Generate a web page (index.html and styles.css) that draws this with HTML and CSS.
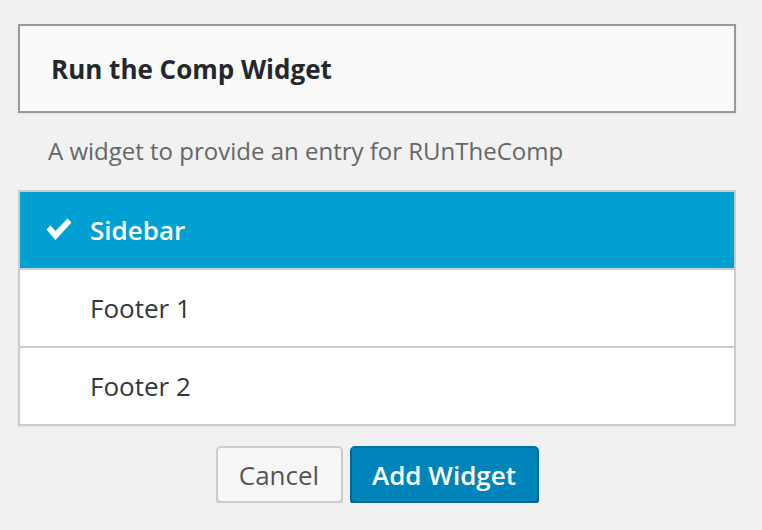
FILE: index.html
```html
<!DOCTYPE html>
<html>
<head>
<meta charset="utf-8">
<link rel="stylesheet" href="styles.css">
</head>
<body>
<div class="panel">
  <div class="header"><h2 class="title">Run the Comp Widget</h2></div>
  <p class="desc">A widget to provide an entry for RUnTheComp</p>
  <ul class="areas">
    <li class="area selected">
      <svg class="check" viewBox="0 0 28 24" width="28" height="24"><path d="M1.5 12.5 L5.5 8.5 L10.5 14 L22.5 1.5 L26.5 5.5 L10.5 23 Z" fill="#fff"/></svg>
      <span>Sidebar</span>
    </li>
    <li class="area"><span>Footer 1</span></li>
    <li class="area"><span>Footer 2</span></li>
  </ul>
  <div class="actions">
    <button class="btn cancel">Cancel</button>
    <button class="btn primary">Add Widget</button>
  </div>
</div>
</body>
</html>
```
FILE: styles.css
```css
html, body {
  margin: 0;
  padding: 0;
  background: #f1f1f1;
  font-family: "Open Sans", "Liberation Sans", sans-serif;
}
.panel {
  width: 718px;
  margin-left: 18px;
  padding-top: 24px;
}
.header {
  box-sizing: border-box;
  height: 89px;
  border: 2px solid #999;
  background: #fafafa;
  box-shadow: 0 1px 2px rgba(0,0,0,0.08);
  display: flex;
  align-items: center;
  padding-left: 31px;
}
.title {
  margin: 0;
  font-size: 26px;
  font-weight: 700;
  color: #23282d;
}
.desc {
  margin: 0;
  padding: 22px 0 0 30px;
  height: 77px;
  box-sizing: border-box;
  font-size: 24px;
  line-height: 32px;
  color: #666;
}
.areas {
  list-style: none;
  margin: 0;
  padding: 0;
  border: 2px solid #ccc;
  background: #fff;
  box-shadow: 0 1px 2px rgba(0,0,0,0.05);
}
.area {
  height: 76px;
  display: flex;
  align-items: center;
  padding-left: 70px;
  position: relative;
  font-size: 26px;
  color: #32373c;
}
.area + .area {
  border-top: 2px solid #ccc;
}
.area.selected {
  background: #00a0d2;
  color: #fff;
  font-weight: 600;
}
.check {
  position: absolute;
  left: 25px;
  top: 25px;
}
.actions {
  display: flex;
  justify-content: center;
  gap: 7px;
  margin-top: 20px;
}
.btn {
  box-sizing: border-box;
  height: 57px;
  border-radius: 5px;
  font-family: inherit;
  font-size: 26px;
  padding: 0 10px;
  border: 2px solid;
}
.cancel {
  width: 127px;
  background: #f7f7f7;
  border-color: #ccc;
  color: #555;
  box-shadow: 0 2px 0 #ccc;
}
.primary {
  width: 189px;
  background: #0085ba;
  border-color: #0073aa #006799 #006799;
  color: #fff;
  font-weight: 600;
  box-shadow: 0 2px 0 #006799;
}
```
